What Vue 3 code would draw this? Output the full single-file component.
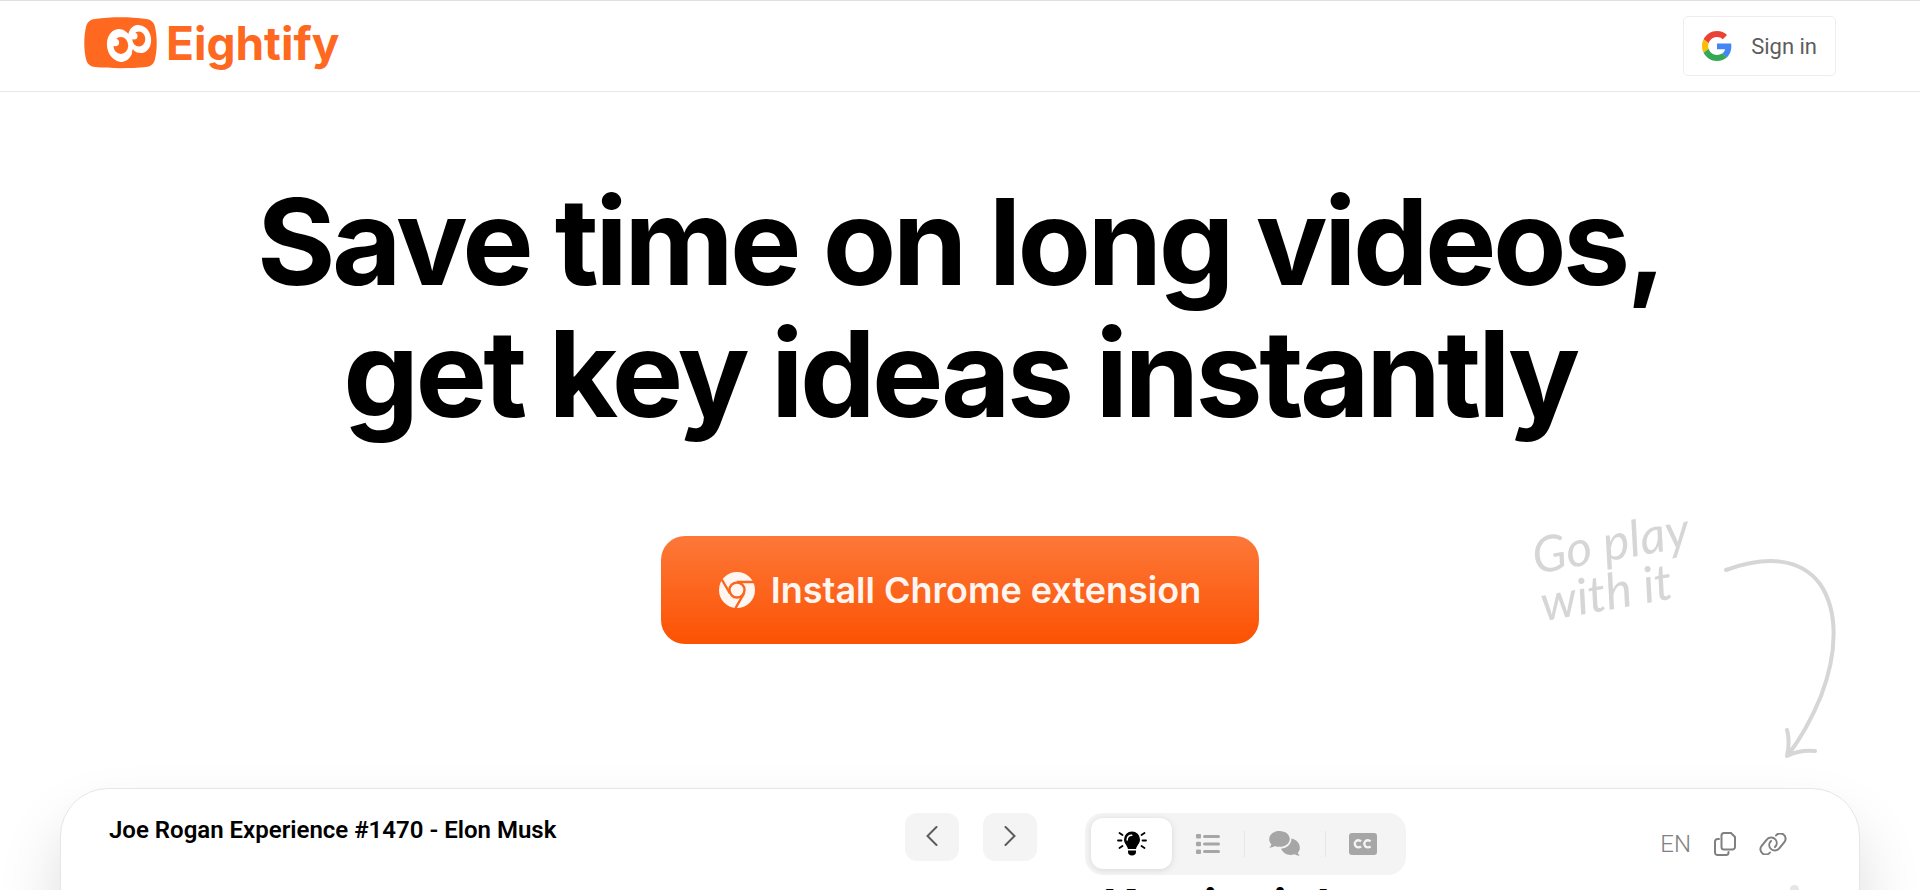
<script setup>
import { ref } from 'vue'

const activeTab = ref('insights')

const tabs = [
  { id: 'insights', label: 'Key insights' },
  { id: 'summary', label: 'Timestamped summary' },
  { id: 'comments', label: 'Top comments' },
  { id: 'transcript', label: 'Transcript' },
]
</script>

<template>
  <div class="page">
    <header class="header">
      <a class="logo" href="#">
        <svg width="73" height="52" viewBox="0 0 73 52" aria-hidden="true">
          <path d="M11 2C27-.3 46-.3 62 2c5 .7 8 3 9 8 2.300 10 2.300 22 0 32-1 5-4 7.300-9 8-16 1.600-35 1.600-51 0-5-.7-8-3-9-8-2.300-10-2.300-22 0-32 1-5 4-7.300 9-8z" fill="#ff681f" />
          <ellipse cx="55.500" cy="22" rx="11.500" ry="14.200" fill="#fff" transform="rotate(-12 55.500 22)" />
          <ellipse cx="36" cy="28.500" rx="13" ry="16.500" fill="#fff" transform="rotate(-10 36 28.500)" />
          <ellipse cx="36.800" cy="28.500" rx="7.400" ry="8.500" fill="#ff681f" />
          <ellipse cx="54.800" cy="22" rx="6.500" ry="7.400" fill="#ff681f" />
          <circle cx="31.300" cy="25.500" r="3.800" fill="#fff" />
          <circle cx="50" cy="19" r="3.500" fill="#fff" />
          <path d="M49.200 32.500c-.2 1.500-.4 2.500-.9 3.500" fill="none" stroke="#ff681f" stroke-width="1.200" />
        </svg>
        <span>Eightify</span>
      </a>
      <button class="sign-in" type="button">
        <svg width="30" height="30" viewBox="0 0 48 48" aria-hidden="true">
          <path fill="#EA4335" d="M24 9.500c3.540 0 6.710 1.220 9.210 3.600l6.850-6.850C35.900 2.380 30.470 0 24 0 14.620 0 6.510 5.380 2.560 13.220l7.980 6.190C12.430 13.720 17.740 9.500 24 9.500z" />
          <path fill="#4285F4" d="M46.980 24.550c0-1.570-.15-3.090-.38-4.550H24v9.020h12.940c-.58 2.960-2.260 5.480-4.780 7.180l7.730 6c4.510-4.180 7.090-10.360 7.090-17.650z" />
          <path fill="#FBBC05" d="M10.530 28.590c-.48-1.450-.76-2.990-.76-4.590s.27-3.140.76-4.590l-7.980-6.190C.92 16.460 0 20.120 0 24c0 3.880.92 7.540 2.560 10.780l7.970-6.190z" />
          <path fill="#34A853" d="M24 48c6.480 0 11.930-2.130 15.890-5.810l-7.730-6c-2.150 1.450-4.920 2.300-8.160 2.300-6.260 0-11.570-4.220-13.470-9.910l-7.980 6.190C6.510 42.620 14.620 48 24 48z" />
        </svg>
        <span>Sign in</span>
      </button>
    </header>

    <main>
      <section class="hero">
        <h1>Save time on long videos,<br />get key ideas instantly</h1>
        <a class="install" href="#">
          <svg width="36" height="36" viewBox="0 0 36 36" aria-hidden="true">
            <circle cx="18" cy="18" r="18" fill="#fff6f1" />
            <circle cx="18" cy="18" r="7.500" fill="none" stroke="#fc651d" stroke-width="2.400" />
            <path d="M18 10h17M11 21.500L2.800 7.500M25 21.500L16.500 36" fill="none" stroke="#fc651d" stroke-width="2.400" />
          </svg>
          <span>Install Chrome extension</span>
        </a>
        <div class="hint">
          <p>Go play<br />with it</p>
          <svg width="114" height="202" viewBox="0 0 114 202" aria-hidden="true">
            <path d="M3 12C42-2 77-1 97 26c18 26 18 68 1 112-9 22-20 42-33 59M64 172c2 7 2 17 0 26 8-4 17-6 28-5" />
          </svg>
        </div>
      </section>

      <section class="card">
        <h2 class="video-title">Joe Rogan Experience #1470 - Elon Musk</h2>
        <div class="pager">
          <button type="button" aria-label="Previous video">
            <svg width="12" height="20" viewBox="0 0 12 20"><path d="M10.500 1L1.500 10l9 9" /></svg>
          </button>
          <button type="button" aria-label="Next video">
            <svg width="12" height="20" viewBox="0 0 12 20"><path d="M1.500 1l9 9-9 9" /></svg>
          </button>
        </div>
        <div class="panel">
          <div class="toolbar">
            <div class="tabs">
              <button
                v-for="tab in tabs"
                :key="tab.id"
                type="button"
                :class="{ active: tab.id === activeTab }"
                :aria-label="tab.label"
                @click="activeTab = tab.id"
              >
                <svg v-if="tab.id === 'insights'" width="30" height="25" viewBox="0 0 30 25">
                  <path d="M15 0.500a8 8 0 0 0-8 8c0 4 3 5.500 4 9.500h8c1-4 4-5.500 4-9.500a8 8 0 0 0-8-8zM11 19.500h8v1.500c0 2-1.500 3.500-4 3.500s-4-1.500-4-3.500z" fill="currentColor" />
                  <path d="M10.200 9c0-3 1.800-4.800 4.600-4.800" fill="none" stroke="#fff" stroke-width="1.500" stroke-linecap="round" />
                  <path d="M1 9.500h3.500M25.500 9.500H29M2.500 2l3 2M27.500 2l-3 2M2.500 17l3-2M27.500 17l-3-2" fill="none" stroke="currentColor" stroke-width="1.800" stroke-linecap="round" />
                </svg>
                <svg v-else-if="tab.id === 'summary'" width="24" height="20" viewBox="0 0 24 20" fill="currentColor">
                  <rect width="5" height="4.600" rx="1" /><rect x="7" y="1" width="17" height="3" rx="1.500" />
                  <rect y="7.700" width="5" height="4.600" rx="1" /><rect x="7" y="8.500" width="17" height="3" rx="1.500" />
                  <rect y="15.400" width="5" height="4.600" rx="1" /><rect x="7" y="16" width="17" height="3" rx="1.500" />
                </svg>
                <svg v-else-if="tab.id === 'comments'" width="31" height="25" viewBox="0 0 31 25" fill="currentColor">
                  <path d="M10.500 0C4.700 0 .2 3.600.2 8.200c0 2 .8 3.800 2.200 5.200-.4 1.200-1.200 2.200-2.200 3 2 .2 3.900-.4 5.500-1.500 1.500.6 3.100.9 4.800.9 5.800 0 10.300-3.400 10.300-7.800S16.300 0 10.500 0z" />
                  <path d="M22.500 7.500c0 5.500-4.500 9.500-10.500 10.300 1.800 3.700 5.200 6.200 9.500 6.200 1.500 0 2.900-.3 4.200-.8 1.500 1 3.200 1.600 5.100 1.400-.9-.8-1.700-1.700-2-2.900 1.300-1.400 2-3.100 2-5 0-4.600-3.600-8.400-8.300-9.200z" />
                </svg>
                <svg v-else width="28" height="22" viewBox="0 0 28 22">
                  <rect width="28" height="22" rx="3" fill="currentColor" />
                  <path d="M12 8.300a3.600 3.600 0 1 0 0 5M21.500 8.300a3.600 3.600 0 1 0 0 5" fill="none" stroke="#f4f4f4" stroke-width="2.400" />
                </svg>
              </button>
            </div>
            <div class="actions">
              <button type="button">EN</button>
              <button type="button" aria-label="Copy">
                <svg width="22" height="24" viewBox="0 0 22 24">
                  <path d="M10 1h7l4 4v10a2.500 2.500 0 0 1-2.500 2.500H10A2.500 2.500 0 0 1 7.500 15V3.500A2.500 2.500 0 0 1 10 1zM5 7H3.500A2.500 2.500 0 0 0 1 9.500v11A2.500 2.500 0 0 0 3.500 23H12a2.500 2.500 0 0 0 2.500-2.500V20" />
                </svg>
              </button>
              <button type="button" aria-label="Copy link">
                <svg width="28" height="22" viewBox="0 0 28 22">
                  <path d="M11 19.500a5.200 5.200 0 0 1-8.500-6.500l5-6a5.500 5.500 0 0 1 9-.5 5.500 5.500 0 0 1-.5 7.500M17 2.500a5.200 5.200 0 0 1 8.500 6.500l-5 6a5.500 5.500 0 0 1-9 .5 5.500 5.500 0 0 1 .5-7.500" />
                </svg>
              </button>
            </div>
          </div>
          <div class="panel-body">
            <h3>Key insights</h3>
            <span class="scroll-thumb"></span>
          </div>
        </div>
      </section>
    </main>
  </div>
</template>

<style>
body {
  margin: 0;
  background: #fff;
}
</style>

<style scoped>
.page {
  height: 100vh;
  overflow: hidden;
  font-family: Inter, "Liberation Sans", sans-serif;
  color: #000;
}

button {
  border: none;
  padding: 0;
  background: none;
  font-family: inherit;
  cursor: pointer;
}

.header {
  display: flex;
  align-items: center;
  justify-content: space-between;
  box-sizing: border-box;
  height: 92px;
  padding: 0 84px;
  border-top: 1px solid #e0e0e0;
  border-bottom: 1px solid #e8e8e8;
}

.logo {
  display: flex;
  align-items: center;
  gap: 9px;
  padding-bottom: 6px;
  color: #ff681f;
  font-size: 46px;
  font-weight: 700;
  line-height: 52px;
  text-decoration: none;
}

.sign-in {
  display: flex;
  align-items: center;
  gap: 19px;
  box-sizing: border-box;
  height: 60px;
  padding: 0 18px;
  border: 1px solid #eee;
  border-radius: 5px;
  color: #5c5c5c;
  font-family: Roboto, sans-serif;
  font-size: 22px;
}

.hero {
  position: relative;
  display: flex;
  flex-direction: column;
  align-items: center;
  padding: 84px 0 144px;
}

h1 {
  margin: 0;
  font-size: 120px;
  font-weight: 700;
  letter-spacing: -0.03em;
  line-height: 132px;
  text-align: center;
}

.install {
  display: flex;
  align-items: center;
  gap: 16px;
  box-sizing: border-box;
  height: 108px;
  margin-top: 96px;
  padding: 0 58px;
  border-radius: 24px;
  background: linear-gradient(#fd7838, #fc5203);
  color: #fff6f1;
  font-size: 36px;
  font-weight: 600;
  text-decoration: none;
}

/* Handwritten note that floats next to the button */
.hint {
  position: absolute;
  right: 83px;
  bottom: 28px;
  display: flex;
  gap: 16px;
  color: #d6d6d6;
}

.hint p {
  margin: -42px 0 0;
  font-family: Lato, sans-serif;
  font-size: 50px;
  font-style: italic;
  line-height: 48px;
  transform: rotate(-10deg);
}

.hint path {
  fill: none;
  stroke: currentColor;
  stroke-width: 4;
  stroke-linecap: round;
  stroke-linejoin: round;
}

.card {
  display: grid;
  grid-template-columns: 36fr auto 35fr;
  box-sizing: border-box;
  min-height: 600px;
  margin: 0 60px;
  padding: 24px 48px;
  border: 1px solid #e6e6e6;
  border-radius: 48px;
  background: #fff;
  box-shadow: 0 36px 64px rgba(0, 0, 0, 0.14);
}

.video-title {
  margin: 0;
  font-family: Roboto, sans-serif;
  font-size: 24px;
  font-weight: 600;
  line-height: 34px;
}

.pager {
  display: flex;
  gap: 24px;
}

.pager button {
  width: 54px;
  height: 48px;
  border-radius: 12px;
  background: #f4f4f4;
}

.pager path {
  fill: none;
  stroke: #5c5c5c;
  stroke-width: 2;
  stroke-linecap: round;
}

.panel {
  padding-left: 48px;
}

.toolbar {
  display: flex;
  align-items: center;
  justify-content: space-between;
  padding-right: 24px;
}

.tabs {
  display: grid;
  grid-template-columns: 81px 72px 81px 75px;
  padding: 5px 6px 6px;
  border-radius: 18px;
  background: #f4f4f4;
}

.tabs button {
  display: flex;
  align-items: center;
  justify-content: center;
  height: 51px;
  color: #a6a6a6;
}

.tabs button.active {
  border-radius: 12px;
  background: #fff;
  box-shadow: 0 1px 6px rgba(0, 0, 0, 0.12);
  color: #000;
}

.tabs button:nth-child(n + 3) {
  background: linear-gradient(#e6e6e6, #e6e6e6) left center / 1px 26px no-repeat;
}

.actions {
  display: flex;
  align-items: center;
  gap: 23px;
}

.actions button {
  display: flex;
  color: #808080;
  font-family: Roboto, sans-serif;
  font-size: 24px;
  font-weight: 300;
}

.actions path {
  fill: none;
  stroke: currentColor;
  stroke-width: 2;
  stroke-linecap: round;
}

.panel-body {
  display: flex;
  justify-content: space-between;
  padding: 4px 12px 0 18px;
}

h3 {
  margin: 0;
  font-size: 48px;
  font-weight: 700;
  line-height: 56px;
}

.scroll-thumb {
  width: 9px;
  height: 120px;
  margin-top: 6px;
  border-radius: 5px;
  background: #e6e6e6;
}
</style>
